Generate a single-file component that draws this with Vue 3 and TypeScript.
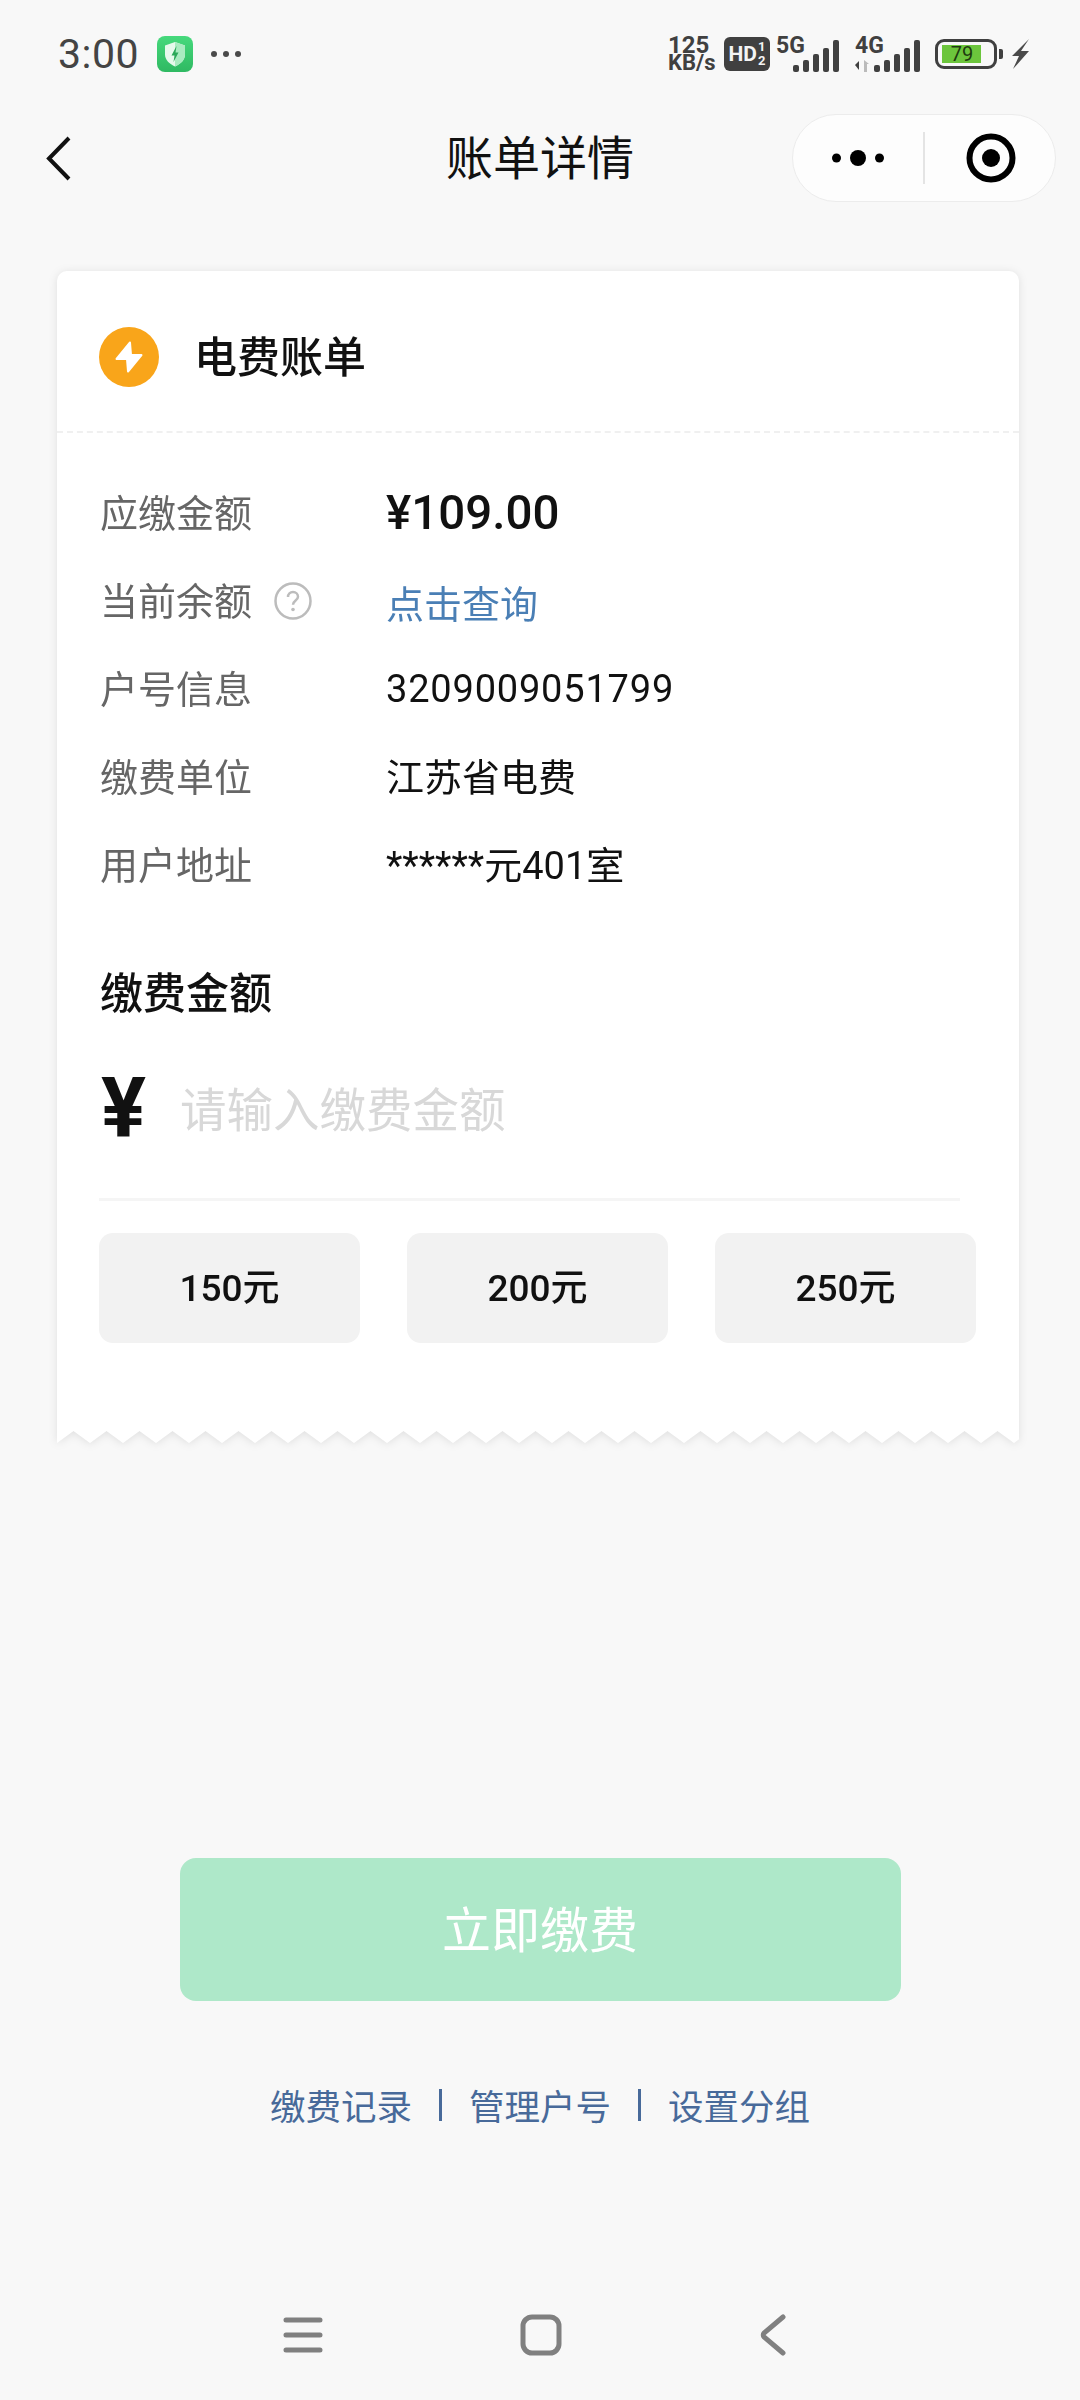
<script setup lang="ts">
const rows = [
  { label: '户号信息', value: '3209009051799', cls: 'digits' },
  { label: '缴费单位', value: '江苏省电费', cls: 'cjk' },
  { label: '用户地址', value: '******元401室', cls: 'cjk' },
]
const amounts = ['150元', '200元', '250元']
const links = ['缴费记录', '管理户号', '设置分组']

const cardWidth = 962
const toothWidth = 33
const toothHeight = 12

// serrated bottom edge of the receipt
const buildTeeth = () => {
  const pts: string[] = ['0,0']
  for (let x = 0; x < cardWidth; x += toothWidth) {
    pts.push(`${x},${toothHeight}`)
    pts.push(`${x + toothWidth / 2},0`)
  }
  pts.push(`${cardWidth},${toothHeight}`, `${cardWidth},0`)
  return pts.join(' ')
}
const teeth = buildTeeth()
</script>

<template>
  <div class="page">
    <div class="status-bar">
      <div class="status-left">
        <span class="time">3:00</span>
        <svg class="shield" width="36" height="36" viewBox="0 0 36 36">
          <defs>
            <linearGradient id="shieldBg" x1="0" y1="0" x2="0" y2="1">
              <stop offset="0" stop-color="#46d97c" />
              <stop offset="1" stop-color="#2fb962" />
            </linearGradient>
          </defs>
          <rect width="36" height="36" rx="8" fill="url(#shieldBg)" />
          <path d="M18 6l10 3.500v9c0 5.500-4.500 9.500-10 12-5.500-2.500-10-6.500-10-12v-9z" fill="#e6f9ec" />
          <path d="M18 6l10 3.500v9c0 5.500-4.500 9.500-10 12z" fill="#a9ebc0" />
          <path d="M19.500 10l-5 9.500h3l-1 6.500 5-9.500h-3z" fill="#2aa858" />
        </svg>
        <svg width="32" height="8" viewBox="0 0 32 8">
          <circle cx="4" cy="4" r="3" fill="#4a4a4a" />
          <circle cx="16" cy="4" r="3" fill="#4a4a4a" />
          <circle cx="28" cy="4" r="3" fill="#4a4a4a" />
        </svg>
      </div>
      <div class="status-right">
        <div class="speed">
          <span class="speed-num">125</span>
          <span>KB/s</span>
        </div>
        <div class="hd">
          <span>HD</span>
          <span class="hd-frac"><i>1</i><i>2</i></span>
        </div>
        <svg class="signal" width="65" height="36" viewBox="0 0 65 36">
          <text x="0" y="17" class="net">5G</text>
          <rect x="17" y="29" width="6" height="7" rx="2" />
          <rect x="27" y="24" width="6" height="12" rx="2" />
          <rect x="37" y="18" width="6" height="18" rx="2" />
          <rect x="47" y="12" width="6" height="24" rx="2" />
          <rect x="57" y="4" width="6" height="32" rx="2" />
        </svg>
        <svg class="signal signal-4g" width="67" height="36" viewBox="0 0 67 36">
          <text x="1" y="17" class="net">4G</text>
          <path d="M1 29l4-4v9z" />
          <path d="M10 24l5 4h-2v8h-3z" fill="#bbb" />
          <rect x="20" y="29" width="6" height="7" rx="2" />
          <rect x="30" y="24" width="6" height="12" rx="2" />
          <rect x="40" y="18" width="6" height="18" rx="2" />
          <rect x="50" y="12" width="6" height="24" rx="2" />
          <rect x="60" y="4" width="6" height="32" rx="2" />
        </svg>
        <div class="battery">
          <div class="battery-body">
            <span class="battery-fill"></span>
            <span class="battery-num">79</span>
          </div>
          <span class="battery-nub"></span>
        </div>
        <svg width="20" height="30" viewBox="0 0 20 30">
          <path d="M19 0L2 17h7L3 30 19 12h-8z" fill="#4a4a4a" />
        </svg>
      </div>
    </div>

    <div class="nav-bar">
      <svg class="back" width="25" height="45" viewBox="0 0 25 45">
        <path d="M23 2L3 22.500 23 43" fill="none" stroke="#111" stroke-width="4" />
      </svg>
      <span class="nav-title">账单详情</span>
      <div class="capsule">
        <div class="capsule-side">
          <svg width="52" height="18" viewBox="0 0 52 18">
            <circle cx="4.500" cy="9" r="4.500" fill="#000" />
            <circle cx="26" cy="9" r="8" fill="#000" />
            <circle cx="47.500" cy="9" r="4.500" fill="#000" />
          </svg>
        </div>
        <span class="capsule-line"></span>
        <div class="capsule-side">
          <svg class="target" width="50" height="50" viewBox="0 0 50 50">
            <circle cx="25" cy="25" r="21.500" fill="none" stroke="#000" stroke-width="6" />
            <circle cx="25" cy="25" r="9" fill="#000" />
          </svg>
        </div>
      </div>
    </div>

    <div class="card">
      <div class="card-body">
        <div class="card-head">
          <span class="bill-icon">
            <svg width="28" height="32" viewBox="0 0 28 32">
              <path d="M15 1.500L1.500 18h10.500L13 30.500 26.500 14H16z" fill="#fff" stroke="#fff" stroke-width="2" stroke-linejoin="round" />
            </svg>
          </span>
          <span class="bill-title">电费账单</span>
        </div>

        <div class="details">
          <div class="row">
            <span class="row-label">应缴金额</span>
            <span class="row-value price">¥109.00</span>
          </div>
          <div class="row">
            <span class="row-label balance">
              当前余额
              <svg class="help" width="38" height="38" viewBox="0 0 38 38">
                <circle cx="19" cy="19" r="17.500" fill="none" stroke="#bcbcbc" stroke-width="2.500" />
                <path d="M14 15c0-3 2.200-5 5-5s5 2 5 4.700c0 3.800-5 3.800-5 8" fill="none" stroke="#bcbcbc" stroke-width="2.500" />
                <circle cx="19" cy="27.500" r="1.800" fill="#bcbcbc" />
              </svg>
            </span>
            <span class="row-value query">点击查询</span>
          </div>
          <div v-for="row in rows" :key="row.label" class="row">
            <span class="row-label">{{ row.label }}</span>
            <span class="row-value" :class="row.cls">{{ row.value }}</span>
          </div>
        </div>

        <div class="pay-title">缴费金额</div>
        <div class="pay-input">
          <span class="yen">¥</span>
          <span class="placeholder">请输入缴费金额</span>
        </div>
        <div class="pay-line"></div>
        <div class="amounts">
          <div v-for="item in amounts" :key="item" class="amount">{{ item }}</div>
        </div>
      </div>
      <svg class="teeth" :width="cardWidth" :height="toothHeight" :viewBox="`0 0 ${cardWidth} ${toothHeight}`">
        <polygon :points="teeth" fill="#fff" />
      </svg>
    </div>

    <button class="pay-btn">立即缴费</button>

    <div class="links">
      <template v-for="(link, i) in links" :key="link">
        <span v-if="i > 0" class="link-sep"></span>
        <span class="link">{{ link }}</span>
      </template>
    </div>

    <div class="sys-nav">
      <svg width="40" height="36" viewBox="0 0 40 36">
        <path d="M3 3h34M3 18h34M3 33h34" fill="none" stroke="#808080" stroke-width="5" stroke-linecap="round" />
      </svg>
      <svg width="42" height="42" viewBox="0 0 42 42">
        <rect x="3" y="3" width="36" height="36" rx="9" fill="none" stroke="#808080" stroke-width="5" />
      </svg>
      <svg width="28" height="42" viewBox="0 0 28 42">
        <path d="M24 3L5 19c-1 1-1 3 0 4l19 16" fill="none" stroke="#808080" stroke-width="5" stroke-linecap="round" />
      </svg>
    </div>
  </div>
</template>

<style>
html,
body {
  margin: 0;
  background: #f8f8f8;
}
</style>

<style scoped>
.page {
  width: 1080px;
  height: 2400px;
  overflow: hidden;
  display: flex;
  flex-direction: column;
  background: #f8f8f8;
  font-family: Roboto, 'Noto Sans CJK SC', sans-serif;
  color: #111;
}

.status-bar {
  height: 108px;
  box-sizing: border-box;
  padding: 0 50px 0 58px;
  display: flex;
  align-items: center;
  justify-content: space-between;
}

.status-left {
  display: flex;
  align-items: center;
}

.time {
  font-size: 41px;
  color: #444;
  width: 99px;
  letter-spacing: 0.5px;
}

.shield {
  margin-right: 17px;
}

.status-right {
  display: flex;
  align-items: center;
  color: #404040;
}

.speed {
  display: flex;
  flex-direction: column;
  width: 56px;
  font-size: 22px;
  font-weight: 700;
  line-height: 18px;
}

.speed-num {
  font-size: 24px;
}

.hd {
  width: 46px;
  height: 34px;
  border-radius: 6px;
  background: #404040;
  color: #f4f4f4;
  display: flex;
  align-items: center;
  justify-content: center;
  gap: 1px;
  font-size: 21px;
  font-weight: 700;
  margin-right: 6px;
}

.hd-frac {
  display: flex;
  flex-direction: column;
  font-size: 13px;
  line-height: 14px;
}

.hd-frac i {
  font-style: normal;
}

.signal {
  fill: #404040;
  margin-right: 13px;
  overflow: visible;
}

.signal-4g {
  margin-right: 14px;
}

.net {
  font-size: 23px;
  font-weight: 700;
}

.battery {
  display: flex;
  align-items: center;
  margin-right: 7px;
}

.battery-body {
  position: relative;
  box-sizing: border-box;
  width: 62px;
  height: 30px;
  border: 3px solid #404040;
  border-radius: 9px;
  display: flex;
  align-items: center;
  justify-content: center;
}

.battery-fill {
  position: absolute;
  left: 4px;
  top: 3px;
  bottom: 3px;
  width: 39px;
  background: #6cc53c;
}

.battery-num {
  position: relative;
  font-size: 20px;
  color: #1e3a10;
  margin-right: 8px;
}

.battery-nub {
  width: 4px;
  height: 10px;
  margin-left: 2px;
  border-radius: 0 2px 2px 0;
  background: #404040;
}

.nav-bar {
  height: 100px;
  padding: 0 24px;
  display: grid;
  grid-template-columns: minmax(0, 1fr) auto minmax(0, 1fr);
  align-items: center;
}

.back {
  margin-left: 22px;
}

.nav-title {
  font-size: 47px;
  line-height: 60px;
  padding-bottom: 6px;
  font-family: 'Noto Sans CJK SC', sans-serif;
}

.capsule {
  justify-self: end;
  flex: none;
  width: 264px;
  height: 88px;
  box-sizing: border-box;
  display: flex;
  align-items: center;
  background: #fdfdfd;
  border: 1.500px solid #ececec;
  border-radius: 44px;
}

.capsule-side {
  flex: 1;
  display: flex;
  justify-content: center;
}

.target {
  margin-left: 2px;
}

.capsule-line {
  width: 1.500px;
  height: 52px;
  background: #e4e4e4;
}

.card {
  width: 962px;
  margin: 63px 0 0 57px;
  filter: drop-shadow(0 1px 4px rgba(0, 0, 0, 0.1));
}

.card-body {
  background: #fff;
  border-radius: 10px 10px 0 0;
  padding-bottom: 88px;
}

.teeth {
  display: block;
  margin-top: -0.5px;
}

.card-head {
  height: 162px;
  box-sizing: border-box;
  padding: 12px 0 0 42px;
  display: flex;
  align-items: center;
  gap: 35px;
  border-bottom: 2px dashed #f0f0f0;
}

.bill-icon {
  width: 60px;
  height: 60px;
  border-radius: 50%;
  background: #f9a51a;
  display: flex;
  align-items: center;
  justify-content: center;
}

.bill-title {
  font-size: 43px;
  font-weight: 500;
  padding-bottom: 6px;
  font-family: 'Noto Sans CJK SC', sans-serif;
}

.details {
  padding: 36px 0 0 43px;
}

.row {
  height: 88px;
  display: flex;
  align-items: center;
}

.row-label {
  width: 286px;
  font-size: 38px;
  color: #666;
  padding-bottom: 6px;
  font-family: 'Noto Sans CJK SC', sans-serif;
}

.balance {
  display: flex;
  align-items: center;
  gap: 22px;
}

.help {
  margin-top: 6px;
}

.row-value {
  font-size: 38px;
  color: #111;
}

.digits {
  letter-spacing: 0.8px;
}

.cjk {
  padding-bottom: 6px;
}

.price {
  font-size: 47.500px;
  font-weight: 500;
}

.query {
  color: #4a7fb5;
}

.pay-title {
  margin: 51px 0 0 43px;
  font-size: 43px;
  line-height: 60px;
  font-weight: 500;
  font-family: 'Noto Sans CJK SC', sans-serif;
}

.pay-input {
  margin: 29px 0 0 46px;
  height: 120px;
  display: flex;
  align-items: center;
  gap: 36px;
}

.yen {
  font-size: 84px;
  font-weight: 700;
  line-height: 1;
  width: 41px;
  display: flex;
  justify-content: center;
}

.placeholder {
  font-size: 46.500px;
  color: #d8d8d8;
  padding-bottom: 6px;
  font-family: 'Noto Sans CJK SC', sans-serif;
}

.pay-line {
  height: 3px;
  margin: 29px 59px 0 42px;
  background: #f5f5f5;
}

.amounts {
  margin: 32px 43px 0 42px;
  display: flex;
  justify-content: space-between;
}

.amount {
  width: 261px;
  height: 110px;
  box-sizing: border-box;
  padding-bottom: 6px;
  display: flex;
  align-items: center;
  justify-content: center;
  border-radius: 14px;
  background: #f2f2f2;
  font-size: 37px;
  font-weight: 500;
}

.pay-btn {
  width: 721px;
  height: 143px;
  margin: 415px auto 0;
  padding: 0 0 6px;
  border: none;
  border-radius: 16px;
  background: #aee8c9;
  color: #fff;
  font-size: 49px;
  font-family: 'Noto Sans CJK SC', sans-serif;
}

.links {
  margin-top: 76px;
  height: 56px;
  display: flex;
  align-items: center;
  justify-content: center;
  gap: 27px;
}

.link {
  font-size: 35.500px;
  color: #486a9a;
  font-family: 'Noto Sans CJK SC', sans-serif;
}

.link-sep {
  width: 3px;
  height: 32px;
  background: #486a9a;
}

.sys-nav {
  margin-top: 181px;
  padding: 0 293px 0 283px;
  display: flex;
  align-items: center;
  justify-content: space-between;
}
</style>
